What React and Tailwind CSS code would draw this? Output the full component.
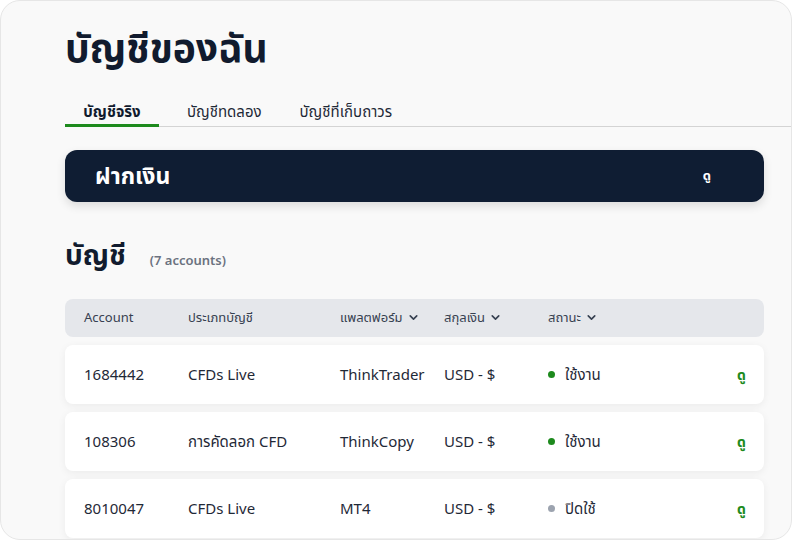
import React from "react";

const FONT = { fontFamily: '"Noto Sans", "Noto Sans Thai", "Noto Sans CJK SC", sans-serif' };

const ROWS = [
  { id: "1684442", type: "CFDs Live", platform: "ThinkTrader", currency: "USD - $", active: true },
  { id: "108306", type: "การคัดลอก CFD", platform: "ThinkCopy", currency: "USD - $", active: true },
  { id: "8010047", type: "CFDs Live", platform: "MT4", currency: "USD - $", active: false },
];

const Chevron = () => (
  <svg width="13" height="13" viewBox="0 0 24 24" fill="none" stroke="currentColor" strokeWidth="3" strokeLinecap="round" strokeLinejoin="round" className="ml-[4px]">
    <path d="M6 9l6 6 6-6" />
  </svg>
);

const COLS = "grid grid-cols-[104px_152px_104px_104px_1fr_auto] items-center";

export default function App() {
  return (
    <div className="w-[792px] h-[540px] bg-white" style={FONT}>
      <div className="w-full h-full overflow-hidden rounded-[20px] border border-[#e6e6e6] bg-[#f9f9f9]">
        <div className="pl-[64px] pr-[27px]">
          {/* Title */}
          <h1 className="pt-[20px] text-[39px] font-bold leading-[52px] text-[#111b2e]">บัญชีของฉัน</h1>

          {/* Tabs */}
          <div className="mt-[27px] -mr-[27px] flex border-b border-[#d4d4d4] text-[15px] text-[#1f2937]">
            <div className="w-[94px] pb-[0px] text-center font-bold border-b-[3px] border-[#1d8a1d] -mb-[1px] text-[#111b2e]">บัญชีจริง</div>
            <div className="ml-[28px] pb-[3px]">บัญชีทดลอง</div>
            <div className="ml-[38px] pb-[3px]">บัญชีที่เก็บถาวร</div>
          </div>

          {/* Deposit banner */}
          <div className="mt-[23px] h-[52px] rounded-[12px] bg-[#0f1d33] flex items-center justify-between pl-[30px] pr-[53px] shadow-[0_4px_10px_rgba(0,0,0,0.12)]">
            <span className="text-[23px] font-bold text-white">ฝากเงิน</span>
            <span className="text-[13px] font-bold text-white">ดู</span>
          </div>

          {/* Accounts heading */}
          <div className="mt-[31px] flex items-baseline">
            <h2 className="text-[28px] font-bold text-[#111b2e]">บัญชี</h2>
            <span className="ml-[24px] text-[13px] font-semibold text-[#6b7280]">(7 accounts)</span>
          </div>

          {/* Table header */}
          <div className={`${COLS} mt-[24px] h-[38px] rounded-[8px] bg-[#e5e7eb] pl-[19px] pr-[18px] text-[13px] text-[#374151]`}>
            <span>Account</span>
            <span>ประเภทบัญชี</span>
            <span className="flex items-center">แพลตฟอร์ม<Chevron /></span>
            <span className="flex items-center">สกุลเงิน<Chevron /></span>
            <span className="flex items-center">สถานะ<Chevron /></span>
            <span />
          </div>

          {/* Rows */}
          <div className="mt-[8px] flex flex-col gap-[8px]">
            {ROWS.map((r) => (
              <div
                key={r.id}
                className={`${COLS} h-[59px] rounded-[8px] bg-white pl-[19px] pr-[18px] text-[15px] text-[#1f2937] shadow-[0_2px_8px_rgba(0,0,0,0.06)]`}
              >
                <span>{r.id}</span>
                <span>{r.type}</span>
                <span>{r.platform}</span>
                <span>{r.currency}</span>
                <span className="flex items-center">
                  <span className={`mr-[10px] h-[7px] w-[7px] rounded-full ${r.active ? "bg-[#1d8a1d]" : "bg-[#9ca3af]"}`} />
                  {r.active ? "ใช้งาน" : "ปิดใช้"}
                </span>
                <span className="text-[14px] font-bold text-[#1d8a1d]">ดู</span>
              </div>
            ))}
          </div>
        </div>
      </div>
    </div>
  );
}
